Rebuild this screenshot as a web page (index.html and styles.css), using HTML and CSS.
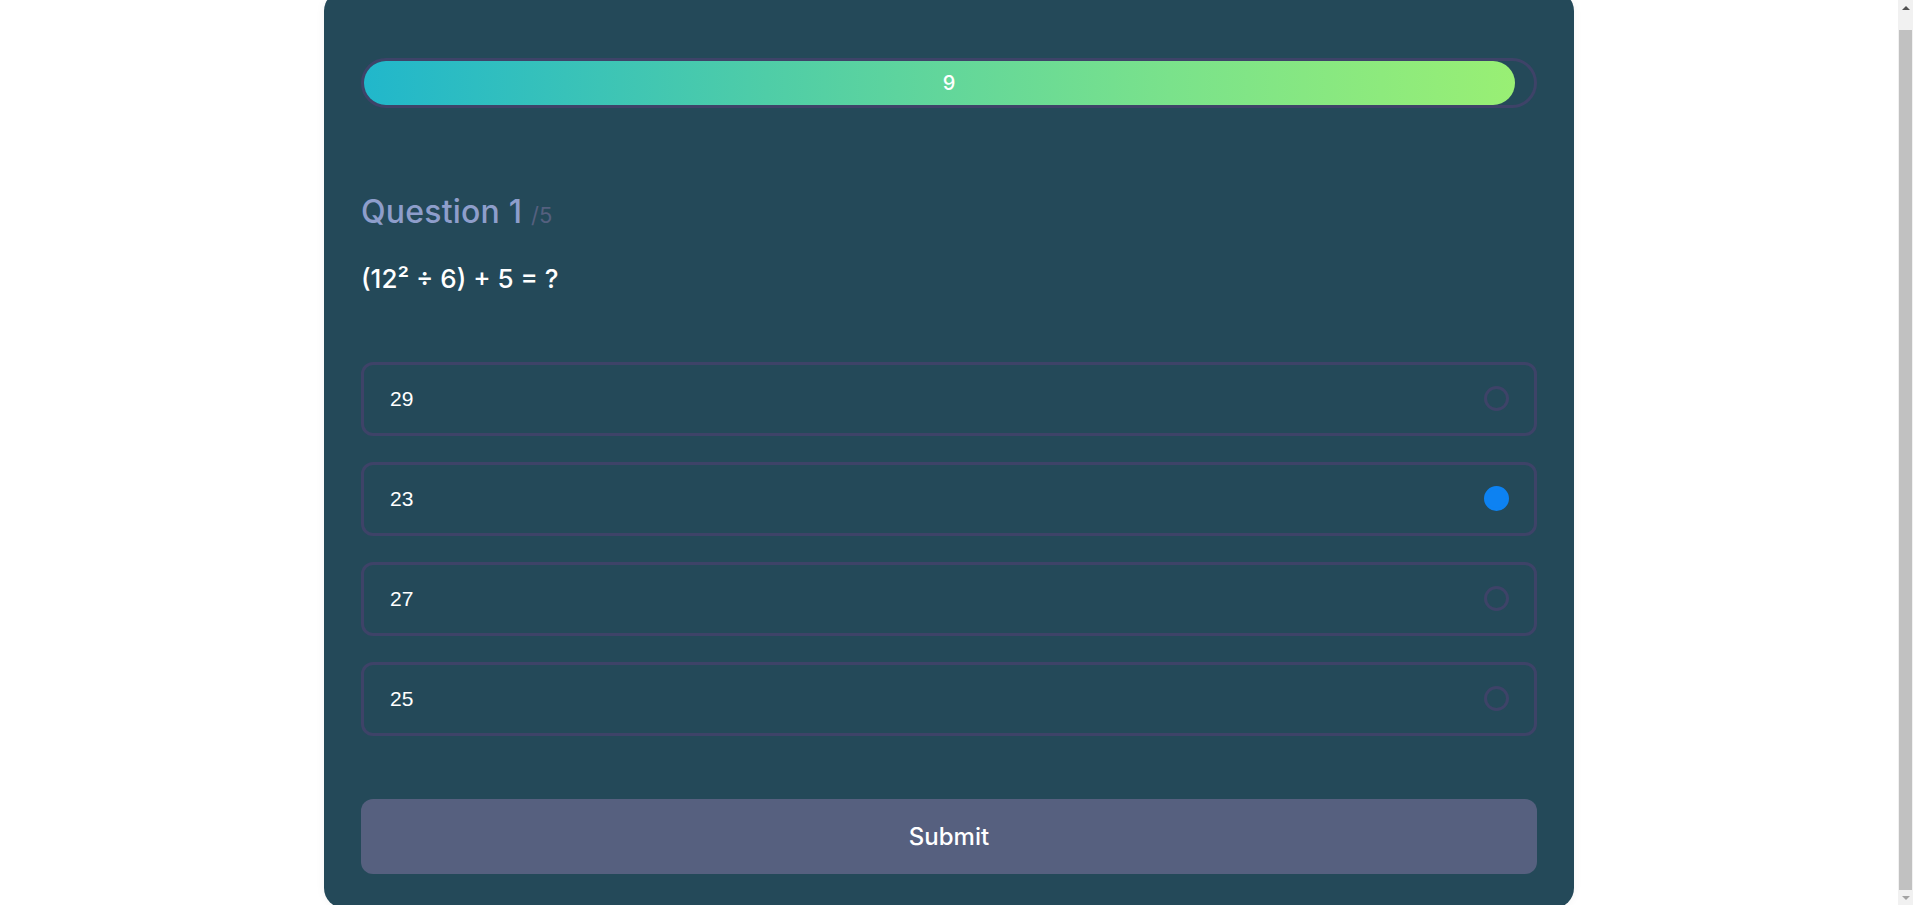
FILE: index.html
```html
<!DOCTYPE html>
<html lang="en">
<head>
<meta charset="utf-8">
<title>Quiz</title>
<link rel="stylesheet" href="styles.css">
</head>
<body>
  <main class="quiz-card">
    <div class="progress">
      <div class="progress-fill" style="width: 98.4%"></div>
      <span class="progress-label">9</span>
    </div>

    <h2 class="question-title">Question 1 <span class="question-total">/5</span></h2>
    <p class="question-text">(12² ÷ 6) + 5 = ?</p>

    <ul class="options">
      <li class="option"><span class="option-text">29</span><span class="radio"></span></li>
      <li class="option"><span class="option-text">23</span><span class="radio radio-checked"></span></li>
      <li class="option"><span class="option-text">27</span><span class="radio"></span></li>
      <li class="option"><span class="option-text">25</span><span class="radio"></span></li>
    </ul>

    <button class="submit" type="button">Submit</button>
  </main>

  <div class="scrollbar" aria-hidden="true">
    <span class="scroll-arrow scroll-arrow-up"></span>
    <span class="scroll-thumb"></span>
    <span class="scroll-arrow scroll-arrow-down"></span>
  </div>
</body>
</html>
```
FILE: styles.css
```css
html, body {
  margin: 0;
  padding: 0;
  background: #ffffff;
}

body {
  font-family: Inter, "Noto Sans", sans-serif;
  padding-right: 15px;
}

.quiz-card {
  box-sizing: border-box;
  width: 1250px;
  margin: -9px auto 0;
  padding: 67px 37px 34px;
  background: #244959;
  border-radius: 20px;
  box-shadow: 0 0 10px rgba(0, 0, 0, 0.05);
  display: flex;
  flex-direction: column;
}

.progress {
  box-sizing: border-box;
  height: 50px;
  border: 3px solid #3e4368;
  border-radius: 25px;
  display: grid;
  grid-template-columns: 1fr;
  grid-template-rows: 1fr;
  align-items: center;
}

.progress-fill {
  grid-area: 1 / 1;
  height: 44px;
  border-radius: 22px;
  background: linear-gradient(90deg, #21b7cb 0%, #4fcda7 35%, #7ae28b 70%, #99ef74 100%);
}

.progress-label {
  grid-area: 1 / 1;
  justify-self: center;
  color: #ffffff;
  font-size: 20px;
  font-weight: 500;
  line-height: 1;
}

.question-title {
  margin: 85px 0 0;
  font-size: 32px;
  font-weight: 500;
  line-height: 1.2;
  color: #8e9ecb;
  letter-spacing: 0.2px;
}

.question-total {
  font-size: 22px;
  font-weight: 400;
  color: #55607f;
}

.question-text {
  margin: 32px 0 0;
  font-size: 26px;
  font-weight: 500;
  line-height: 1.2;
  color: #ffffff;
}

.options {
  list-style: none;
  margin: 67px 0 0;
  padding: 0;
  display: flex;
  flex-direction: column;
  gap: 26px;
}

.option {
  box-sizing: border-box;
  height: 74px;
  border: 3px solid #3e4368;
  border-radius: 12px;
  padding: 0 25px 0 26px;
  display: flex;
  align-items: center;
  justify-content: space-between;
}

.option-text {
  font-family: "Liberation Sans", Arial, sans-serif;
  font-size: 21px;
  color: #ffffff;
}

.radio {
  box-sizing: border-box;
  width: 25px;
  height: 25px;
  border: 3px solid #3e4368;
  border-radius: 50%;
}

.radio-checked {
  border-color: #0d82f2;
  background: #0d82f2;
}

.submit {
  margin-top: 63px;
  height: 75px;
  border: none;
  border-radius: 12px;
  background: #56607f;
  color: #ffffff;
  font-family: Inter, "Noto Sans", sans-serif;
  font-size: 24px;
  font-weight: 500;
}

/* imitation of the browser's classic scrollbar, fixed over the right edge */
.scrollbar {
  position: fixed;
  top: 0;
  right: 0;
  bottom: 0;
  width: 15px;
  background: #f1f1f1;
  display: flex;
  flex-direction: column;
  align-items: center;
}

.scroll-arrow {
  flex: none;
  height: 15px;
  width: 15px;
  display: flex;
  align-items: center;
  justify-content: center;
}

.scroll-arrow::before {
  content: "";
  width: 0;
  height: 0;
  border-left: 4px solid transparent;
  border-right: 4px solid transparent;
}

.scroll-arrow-up::before {
  border-bottom: 4px solid #505050;
}

.scroll-arrow-down::before {
  border-top: 4px solid #a3a3a3;
}

.scroll-thumb {
  flex: 1;
  width: 13px;
  margin-top: 15px;
  background: #c1c1c1;
}
```
